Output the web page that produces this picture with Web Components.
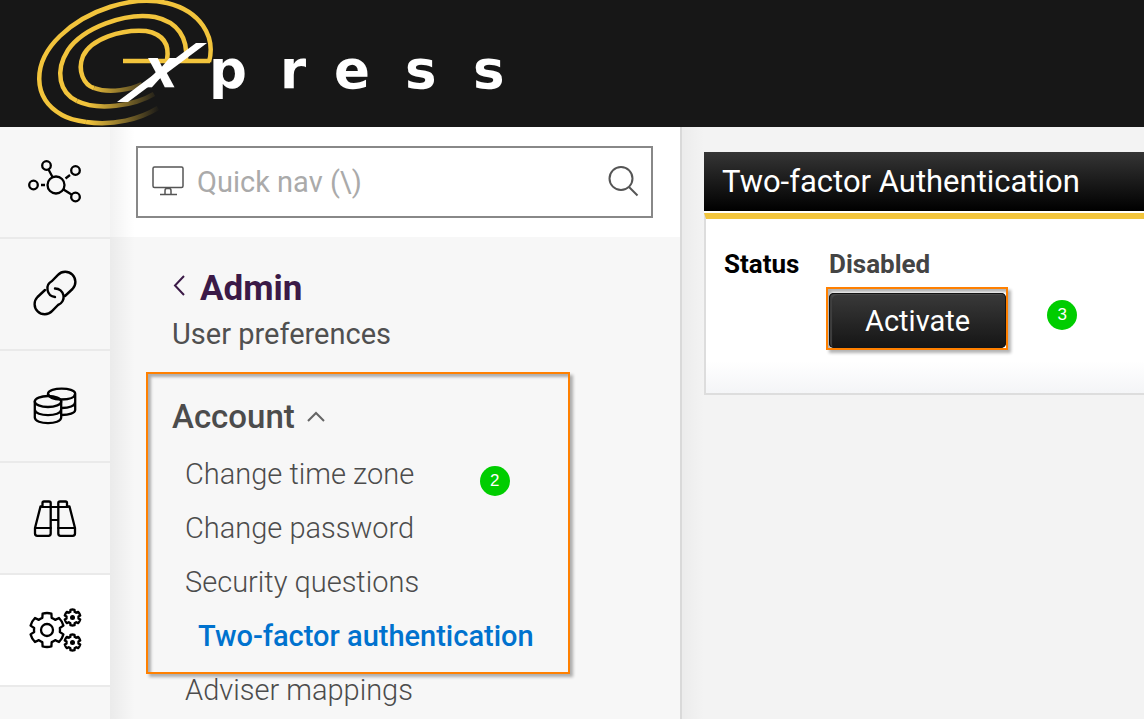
<!DOCTYPE html>
<html lang="en">
<head>
<meta charset="utf-8">
<title>Two-factor Authentication</title>
<style>
  html, body { height: 100%; }
  body { margin: 0; font-family: Roboto, "Liberation Sans", sans-serif; background: #f3f3f3; overflow: hidden; }
</style>
</head>
<body>
<xp-app></xp-app>

<script>
const define = (name, html, setup) => {
  const tpl = document.createElement('template');
  tpl.innerHTML = html;
  customElements.define(name, class extends HTMLElement {
    constructor() {
      super();
      this.attachShadow({ mode: 'open' }).append(tpl.content.cloneNode(true));
    }
    connectedCallback() { if (setup) setup(this, this.shadowRoot); }
  });
};

/* Outline of a six-toothed gear. */
const gear = (cx, cy, ro, ri) => {
  const pt = (r, deg) => {
    const a = deg * Math.PI / 180;
    return (cx + r * Math.cos(a)).toFixed(2) + ' ' + (cy + r * Math.sin(a)).toFixed(2);
  };
  let d = '';
  for (let i = 0; i < 6; i++) {
    const a = -90 + i * 60;
    d += (i ? 'L' : 'M') + pt(ri, a - 21) + 'L' + pt(ro, a - 15) +
      'A' + ro + ' ' + ro + ' 0 0 1 ' + pt(ro, a + 15) + 'L' + pt(ri, a + 21) +
      'A' + ri + ' ' + ri + ' 0 0 1 ' + pt(ri, a + 39);
  }
  return d + 'Z';
};

const icons = {
  network: `<g stroke-width="2.300" stroke-linecap="butt"><circle cx="29" cy="24" r="8.500"/><circle cx="6.500" cy="24" r="4.300"/><circle cx="19.500" cy="4.500" r="4.300"/><circle cx="48.500" cy="9.500" r="4.300"/><circle cx="48.500" cy="36" r="4.300"/><path d="M21.500 8.500l4 7.500M36.500 28.500l8 5M14 24h4M38.500 17.500l4.500-3.500"/></g>`,
  link: `<path stroke-width="2.400" d="M38 36L45.500 29A10 10 0 0 0 31 14.800L25 21A8.500 8.500 0 0 0 28 37M18 30L10.500 37A10 10 0 0 0 25 51.200L31 45A8.500 8.500 0 0 0 28 28.500"/>`,
  coins: `<g stroke-width="2.300"><ellipse cx="21" cy="22.500" rx="13.200" ry="5.500"/><path d="M7.800 22.500V38.500C8 46 34 46 34.200 38.500V22.500M7.800 30.500C8 38 34 38 34.200 30.500M21 16.500V14.500C21.500 8 48 8 48.200 14.500V31C48 34 42 36 35 36M21 14.500C22 19.500 28 20.500 34 20.500 42 20.500 48 18.500 48.200 14.500M48.200 23C48 27 42 29 35 29"/></g>`,
  binoculars: `<g stroke-width="2.300"><path d="M13.500 13.500L8 35V40.500Q8 42.800 10.300 42.800H21.500Q23.700 42.800 23.700 40.500V10Q23.700 8.500 22 8.500H17Q15.500 8.500 15.500 10V13.500H13.500ZM42.500 13.500L48 35V40.500Q48 42.800 45.700 42.800H33.500Q31.300 42.800 31.300 40.500V10Q31.300 8.500 33 8.500H38.500Q40 8.500 40 10V13.500H42.500Z"/><path stroke-width="1.800" d="M15 14H41M24 27H31M8 35H24M31 35H48"/></g>`,
  gears: `<g stroke-width="2.300"><path d="${gear(19, 28, 17, 13)}"/><circle cx="19" cy="28" r="6"/><path d="${gear(44.5, 15.5, 8, 6)}"/><path d="${gear(44.5, 40.5, 8, 6)}"/></g><g fill="#000" stroke="none"><circle cx="44.500" cy="15.500" r="2.500"/><circle cx="44.500" cy="40.500" r="2.500"/></g>`
};
const boxes = { network: '0 -7 56 56', link: '0 6 56 56', coins: '0 -1 56 56', binoculars: '0 -3 56 56', gears: '-1 0 56 56' };

define('rail-item', `
  <style>
    :host { display: block; border-bottom: 2px solid #eaeaea; background: #f7f7f7; }
    :host([active]) { background: #fff; }
    a { display: flex; align-items: center; justify-content: center; height: 110px; }
    svg { width: 56px; height: 56px; overflow: visible; fill: none; stroke: #000; stroke-linecap: round; stroke-linejoin: round; }
  </style>
  <a href="#"><svg aria-hidden="true"></svg></a>`,
  (el, root) => {
    const name = el.getAttribute('icon');
    const svg = root.querySelector('svg');
    svg.setAttribute('viewBox', boxes[name]);
    svg.innerHTML = icons[name];
    root.querySelector('a').setAttribute('aria-label', el.getAttribute('label'));
  });

define('xp-logo', `
  <style>
    :host { display: block; }
    svg { display: block; width: 540px; height: 127px; }
    text { font: bold 53px "DejaVu Sans", sans-serif; fill: #fff; }
    .x { font-style: oblique; }
  </style>
  <svg viewBox="0 0 540 127" role="img" aria-label="Xpress">
    <defs>
      <linearGradient id="tail" gradientUnits="userSpaceOnUse" x1="88" y1="0" x2="160" y2="0">
        <stop offset="0" stop-color="#f2c43c"/><stop offset="1" stop-color="#f2c43c" stop-opacity="0"/>
      </linearGradient>
    </defs>
    <g fill="none" stroke="#f2c43c" stroke-width="4.500">
      <path d="M123 61H210"/>
      <path d="M209 62C216 36 200 11 167 3C132 -5 87 10 60 36C32 63 32 98 62 115C69 119 78 121 86 122"/>
      <path d="M186 60C188 38 178 22 155 17C125 12 83 28 68 50C54 72 60 93 77 101"/>
      <path d="M167 60C170 43 162 34 146 31C121 29 91 39 83 56C77 71 84 85 94 88"/>
      <path stroke="url(#tail)" d="M86 122C114 126 140 119 158 108"/>
      <path stroke="url(#tail)" d="M77 101C98 111 134 106 154 94"/>
      <path stroke="url(#tail)" d="M94 88C110 94 132 89 142 84"/>
    </g>
    <path fill="#fff" d="M117 102L196 43H207L128 102Z"/>
    <text class="x" x="144" y="87">x</text>
    <text x="209 280 334 405 473" y="88">press</text>
  </svg>`);

define('quick-nav', `
  <style>
    :host { display: block; padding: 19px 27px 19px 26px; }
    form { display: flex; align-items: center; height: 68px; border: 2px solid #888; margin: 0; padding: 0 12px 0 13px; gap: 12px; }
    input { flex: 1; min-width: 0; border: 0; padding: 0; outline: 0; background: none; font: 29px Roboto, sans-serif; color: #444; }
    input::placeholder { color: #aaa; opacity: 1; }
    button { border: 0; padding: 0; background: none; display: flex; }
    svg { fill: none; stroke: #555; stroke-width: 2; }
  </style>
  <form>
    <svg width="34" height="32" viewBox="0 0 34 32" stroke-linejoin="round" aria-hidden="true" style="stroke-width:1.500"><rect x="2" y="1" width="30" height="20.500" rx="1.500"/><path d="M9 28.500H26M14 28V25Q14 22.500 15.500 22.500H18.500Q20 22.500 20 25V28"/></svg>
    <input type="text" placeholder="Quick nav (\\)" aria-label="Quick nav">
    <button type="button" aria-label="Search"><svg width="32" height="32" viewBox="0 0 32 32"><circle cx="14" cy="12.500" r="11.500"/><path d="M22 21L30.500 29.500"/></svg></button>
  </form>`);

define('nav-link', `
  <style>
    :host { display: block; padding-left: 13px; }
    :host([current]) { padding-left: 26px; }
    a { display: block; font-size: 29px; line-height: 54px; font-weight: 300; color: #4c4c4c; text-decoration: none; white-space: nowrap; }
    :host([current]) a { font-weight: 500; color: #0072ce; }
  </style>
  <a href="#"><slot></slot></a>`);

/* Orange guide frame that lies over the content it surrounds, with a numbered marker. */
define('guide-step', `
  <style>
    :host { display: block; position: relative; width: fit-content; }
    .frame { position: absolute; inset: var(--frame-inset); border: 2px solid #ff8000; pointer-events: none;
      box-shadow: 3px 3px 3px rgba(0,0,0,.3), inset 3px 3px 3px rgba(0,0,0,.3); }
    .mark { position: absolute; top: var(--mark-top); right: var(--mark-right); width: 30px; height: 30px; border-radius: 50%;
      background: #00cd00; color: #fff; font: 17px/30px "Liberation Sans", sans-serif; text-align: center; }
  </style>
  <slot></slot>
  <div class="frame"></div>
  <div class="mark"></div>`,
  (el, root) => { root.querySelector('.mark').textContent = el.getAttribute('number'); });

define('side-nav', `
  <style>
    :host { display: block; background: linear-gradient(90deg, rgba(0,0,0,.05), transparent 25px), linear-gradient(#fff 110px, #f7f7f7 110px); border-right: 2px solid #d9d9d9; }
    nav { padding: 30px 27px 0 62px; }
    h1 { margin: 0; font-size: 35px; line-height: 44px; font-weight: 700; color: #3b1a47; }
    h1 a { display: flex; align-items: center; gap: 14px; color: inherit; text-decoration: none; }
    p { margin: 0; font-size: 29px; line-height: 46px; color: #505050; }
    guide-step { margin-top: 30px; --frame-inset: -15px -36px -11px -26px; --mark-top: 79px; --mark-right: 24px; }
    h2 { margin: 0; }
    h2 button { display: flex; align-items: center; gap: 12px; border: 0; padding: 0; background: none; font: 500 33px/60px Roboto, sans-serif; color: #4c4c4c; }
    svg { fill: none; stroke: currentColor; }
  </style>
  <quick-nav></quick-nav>
  <nav>
    <h1><a href="#"><svg width="14" height="28" viewBox="0 0 14 28" stroke-width="2"><path d="M12 1L3 10.500L12 20"/></svg>Admin</a></h1>
    <p>User preferences</p>
    <guide-step number="2">
      <h2><button type="button" aria-expanded="true">Account <svg width="18" height="12" viewBox="0 0 18 12" stroke-width="2" opacity=".85"><path d="M1 10L9 2L17 10"/></svg></button></h2>
      <nav-link>Change time zone</nav-link>
      <nav-link>Change password</nav-link>
      <nav-link>Security questions</nav-link>
      <nav-link current>Two-factor authentication</nav-link>
    </guide-step>
    <nav-link>Adviser mappings</nav-link>
  </nav>`);

define('status-panel', `
  <style>
    :host { display: block; }
    h2 { margin: 0; padding-left: 18px; font-size: 31px; line-height: 59px; font-weight: 400; color: #fff; white-space: nowrap;
      background: linear-gradient(#353535, #000) padding-box; border-bottom: 2px solid #fff; }
    .body { display: grid; grid-template-columns: 105px 1fr; padding: 28px 18px 45px; border: 2px solid #ddd; border-top: 6px solid #f2c53d; border-right: 0;
      background: linear-gradient(0deg, #f4f5f7, #fff 32px); }
    dl { display: contents; }
    dt, dd { margin: 0; font-size: 26px; line-height: 34px; font-weight: 700; color: #000; }
    dd { color: #444; }
    guide-step { grid-column: 2; margin-top: 12px; --frame-inset: -6px -2px -2px -3px; --mark-top: 7px; --mark-right: -71px; }
    button { display: block; height: 55px; padding: 0 36px; border: 0; border-radius: 5px; font: 29px Roboto, sans-serif; color: #fff;
      background: linear-gradient(#3a3a3a, #151515); box-shadow: inset 0 0 0 1px #151515, inset 3px 2px 1px #4a4a4a; }
  </style>
  <h2>Two-factor Authentication</h2>
  <div class="body">
    <dl><dt>Status</dt><dd>Disabled</dd></dl>
    <guide-step number="3"><button type="button">Activate</button></guide-step>
  </div>`);

define('xp-app', `
  <style>
    :host { display: grid; grid-template: auto 1fr / 110px 572px 1fr; min-height: 100vh; }
    header { grid-column: 1 / -1; background: #171717; }
    aside { background: #f7f7f7; }
    main { padding: 25px 0 0 22px; min-width: 0; background: linear-gradient(90deg, rgba(0,0,0,.03), transparent 22px), #f3f3f3; }
  </style>
  <header><xp-logo></xp-logo></header>
  <aside>
    <rail-item icon="network" label="Network"></rail-item>
    <rail-item icon="link" label="Links"></rail-item>
    <rail-item icon="coins" label="Funds"></rail-item>
    <rail-item icon="binoculars" label="Search"></rail-item>
    <rail-item icon="gears" label="Admin" active></rail-item>
  </aside>
  <side-nav></side-nav>
  <main><status-panel></status-panel></main>`);
</script>
</body>
</html>
